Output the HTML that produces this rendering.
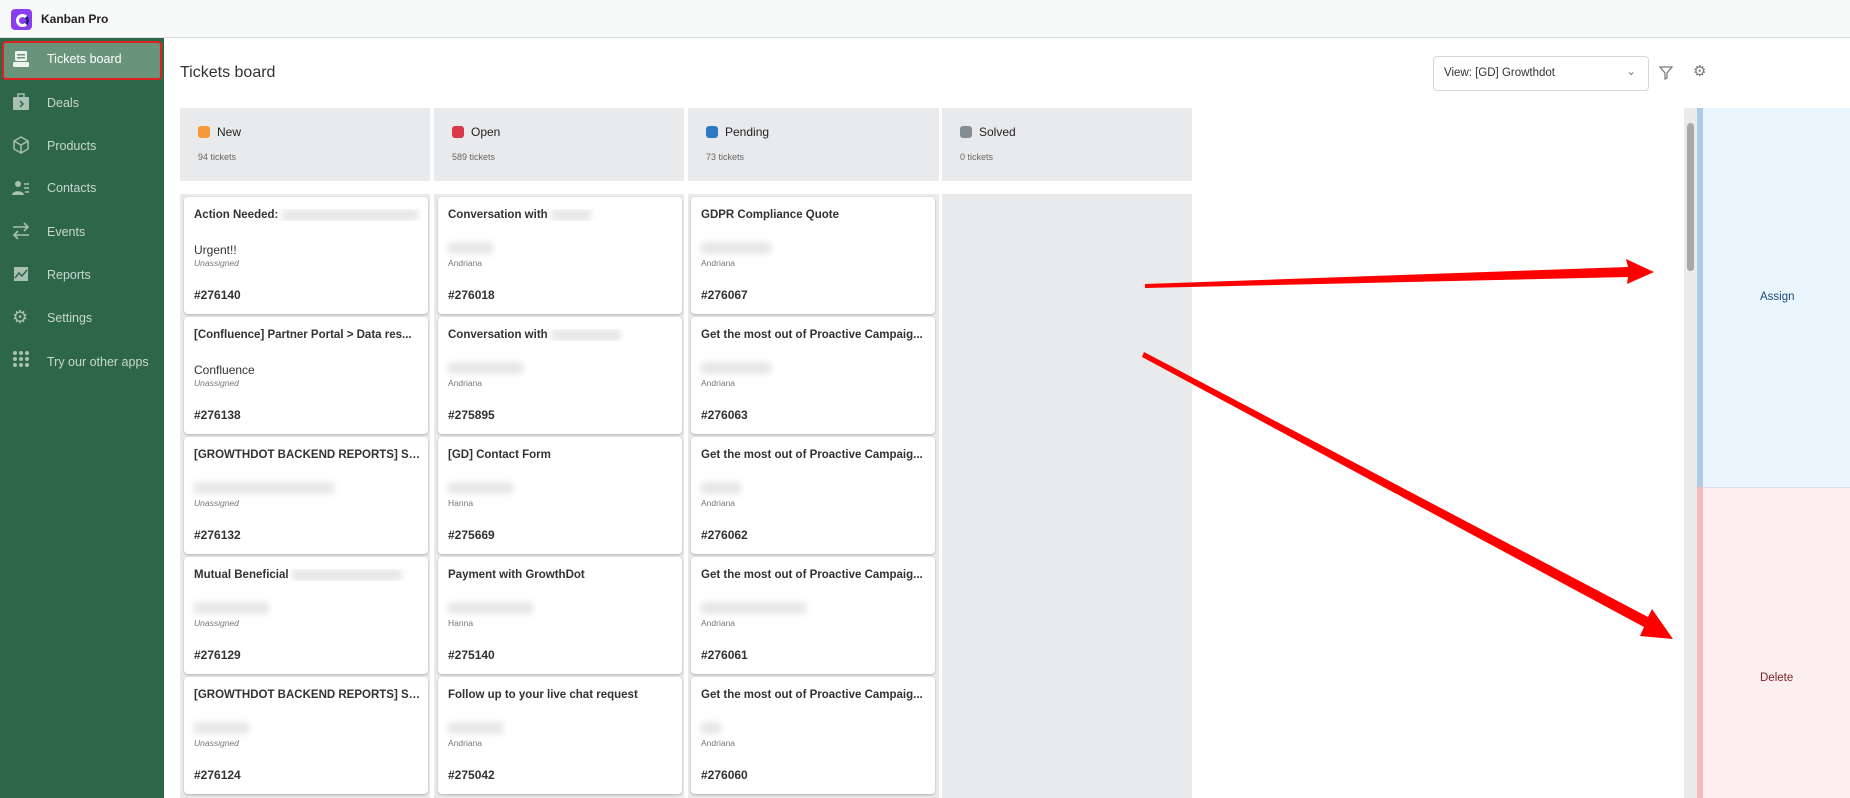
<!DOCTYPE html>
<html><head><meta charset="utf-8"><style>
*{box-sizing:border-box;margin:0;padding:0}
body{width:1850px;height:798px;overflow:hidden;background:#fff;font-family:"Liberation Sans",sans-serif;position:relative;color:#303844}
.top{position:absolute;left:0;top:0;width:1850px;height:38px;background:#f8f9f9;border-bottom:1px solid #dde0e3}
.logo{position:absolute;left:11px;top:9px;width:21px;height:21px;border-radius:4px;background:#8a3ef0}
.logo:after{content:"";position:absolute;left:5px;top:5px;width:7px;height:7px;border:3px solid #fff;border-radius:50%;border-right-color:#1b2a7a}
.brand{position:absolute;left:41px;top:12px;font-size:12px;font-weight:bold;color:#222}
.side{position:absolute;left:0;top:38px;width:164px;height:760px;background:#2e6648}
.act{position:absolute;left:2px;top:3px;width:160px;height:39px;background:#6a9479;border:2px solid #e02020;border-radius:4px}
.mi{position:absolute;left:47px;font-size:12.5px;color:#c9d8cf}
.title{position:absolute;left:180px;top:64px;font-size:16px;color:#333}
.dd{position:absolute;left:1433px;top:56px;width:216px;height:35px;border:1px solid #d5d8dc;border-radius:4px;font-size:11.5px;padding:10px 10px;color:#333}
.hd{position:absolute;top:108px;height:73px;background:#e9eaec}
.hd b{position:absolute;left:18px;top:17px;font-weight:normal;font-size:12px;color:#222}
.hd i{position:absolute;left:0;top:18px;width:12px;height:12px;border-radius:3px}
.hd s{position:absolute;left:18px;top:44px;text-decoration:none;font-size:9px;color:#666}
.colbg{position:absolute;top:194px;height:604px;background:#e9eaec}
.card{position:absolute;width:244px;height:117px;background:#fff;border-radius:4px;box-shadow:0 1px 2px rgba(0,0,0,.25);overflow:hidden}
.card .t{position:absolute;left:10px;top:12px;width:228px;font-size:11.5px;font-weight:bold;color:#333;white-space:nowrap;overflow:hidden;text-overflow:ellipsis}
.card .s{position:absolute;left:10px;top:46px;font-size:12px;color:#333}
.card .a{position:absolute;left:10px;top:61px;font-size:8.5px;color:#777}
.card .n{position:absolute;left:10px;top:91px;font-size:12px;font-weight:bold;color:#333}
.bl{display:inline-block;height:12px;background:#e8e8e8;filter:blur(3px);vertical-align:middle}
.blk{position:absolute;left:10px;top:45px;height:12px;background:#e8e8e8;filter:blur(3px)}
svg.si{position:absolute;left:12px}
</style></head><body>
<div class="top"><div class="logo"></div><div class="brand">Kanban Pro</div></div>
<div class="side">
<div class="act"></div>
<svg class="si" style="top:12px" width="18" height="18" viewBox="0 0 18 18"><rect x="3" y="1" width="12" height="10" rx="1.5" fill="#eef3ef"/><rect x="1" y="12" width="16" height="5" rx="1" fill="#eef3ef"/><rect x="5" y="4" width="8" height="1.5" fill="#6a9479"/><rect x="5" y="7" width="8" height="1.5" fill="#6a9479"/></svg>
<div class="mi" style="top:14px;color:#fff">Tickets board</div>
<svg class="si" style="top:55px" width="18" height="18" viewBox="0 0 18 18"><rect x="1" y="4" width="16" height="13" rx="1" fill="#a9c0b2"/><rect x="6" y="1" width="6" height="4" fill="none" stroke="#a9c0b2" stroke-width="1.5"/><path d="M8 8l3 3-3 3" stroke="#2e6648" stroke-width="1.5" fill="none"/></svg>
<div class="mi" style="top:58px">Deals</div>
<svg class="si" style="top:98px" width="18" height="18" viewBox="0 0 18 18"><path d="M9 1l7 4v8l-7 4-7-4V5z M2 5l7 4 7-4 M9 9v8" fill="none" stroke="#a9c0b2" stroke-width="1.5"/></svg>
<div class="mi" style="top:101px">Products</div>
<svg class="si" style="top:141px" width="18" height="18" viewBox="0 0 18 18"><circle cx="6" cy="5" r="3" fill="#a9c0b2"/><path d="M0 16c0-5 12-5 12 0z" fill="#a9c0b2"/><path d="M12 5h5M12 9h5M13 13h4" stroke="#a9c0b2" stroke-width="1.4"/></svg>
<div class="mi" style="top:143px">Contacts</div>
<svg class="si" style="top:184px" width="18" height="18" viewBox="0 0 18 18"><path d="M1 5h15M12 1l4 4-4 4M17 13H2M6 9l-4 4 4 4" fill="none" stroke="#a9c0b2" stroke-width="1.6"/></svg>
<div class="mi" style="top:187px">Events</div>
<svg class="si" style="top:227px" width="18" height="18" viewBox="0 0 18 18"><rect x="2" y="2" width="14" height="14" fill="#a9c0b2"/><path d="M3 13l4-5 3 3 5-6" stroke="#2e6648" stroke-width="1.5" fill="none"/></svg>
<div class="mi" style="top:230px">Reports</div>
<div class="mi" style="top:269px;left:12px;font-size:18px;color:#a9c0b2">⚙</div><div class="mi" style="top:273px">Settings</div>
<svg class="si" style="top:312px" width="18" height="18" viewBox="0 0 18 18" fill="#a9c0b2"><circle cx="3" cy="3" r="2"/><circle cx="9" cy="3" r="2"/><circle cx="15" cy="3" r="2"/><circle cx="3" cy="9" r="2"/><circle cx="9" cy="9" r="2"/><circle cx="15" cy="9" r="2"/><circle cx="3" cy="15" r="2"/><circle cx="9" cy="15" r="2"/><circle cx="15" cy="15" r="2"/></svg>
<div class="mi" style="top:317px">Try our other apps</div>
</div>
<div class="title">Tickets board</div>
<div class="dd">View: [GD] Growthdot<span style="position:absolute;right:12px;top:7px;color:#777">&#8964;</span></div>
<svg style="position:absolute;left:1658px;top:65px" width="16" height="16" viewBox="0 0 16 16"><path d="M2 2h12l-5 6v5l-2 1V8z" fill="none" stroke="#777" stroke-width="1.2"/></svg>
<div style="position:absolute;left:1693px;top:62px;font-size:15px;color:#777">⚙</div>

<div class="hd" style="left:180px;width:250px"><i style="left:18px;background:#f59a3a"></i><b style="left:37px">New</b><s>94 tickets</s></div>
<div class="hd" style="left:434px;width:250px"><i style="left:18px;background:#d9384a"></i><b style="left:37px">Open</b><s>589 tickets</s></div>
<div class="hd" style="left:688px;width:251px"><i style="left:18px;background:#2f7ac0"></i><b style="left:37px">Pending</b><s>73 tickets</s></div>
<div class="hd" style="left:942px;width:250px"><i style="left:18px;background:#868c94"></i><b style="left:37px">Solved</b><s>0 tickets</s></div>

<div class="colbg" style="left:180px;width:250px"></div>
<div class="colbg" style="left:434px;width:250px"></div>
<div class="colbg" style="left:688px;width:251px"></div>
<div class="colbg" style="left:942px;width:250px"></div>

<div class="card" style="left:184px;top:197px"><div class="t">Action Needed: <span class="bl" style="width:136px"></span></div><div class="s">Urgent!!</div><div class="a"><i>Unassigned</i></div><div class="n">#276140</div></div>
<div class="card" style="left:184px;top:317px"><div class="t">[Confluence] Partner Portal &gt; Data res...</div><div class="s">Confluence</div><div class="a"><i>Unassigned</i></div><div class="n">#276138</div></div>
<div class="card" style="left:184px;top:437px"><div class="t">[GROWTHDOT BACKEND REPORTS] Su...</div><div class="blk" style="width:140px"></div><div class="a"><i>Unassigned</i></div><div class="n">#276132</div></div>
<div class="card" style="left:184px;top:557px"><div class="t">Mutual Beneficial <span class="bl" style="width:110px"></span></div><div class="blk" style="width:75px"></div><div class="a"><i>Unassigned</i></div><div class="n">#276129</div></div>
<div class="card" style="left:184px;top:677px"><div class="t">[GROWTHDOT BACKEND REPORTS] Su...</div><div class="blk" style="width:55px"></div><div class="a"><i>Unassigned</i></div><div class="n">#276124</div></div>

<div class="card" style="left:438px;top:197px"><div class="t">Conversation with <span class="bl" style="width:40px"></span></div><div class="blk" style="width:45px"></div><div class="a">Andriana</div><div class="n">#276018</div></div>
<div class="card" style="left:438px;top:317px"><div class="t">Conversation with <span class="bl" style="width:70px"></span></div><div class="blk" style="width:75px"></div><div class="a">Andriana</div><div class="n">#275895</div></div>
<div class="card" style="left:438px;top:437px"><div class="t">[GD] Contact Form</div><div class="blk" style="width:65px"></div><div class="a">Hanna</div><div class="n">#275669</div></div>
<div class="card" style="left:438px;top:557px"><div class="t">Payment with GrowthDot</div><div class="blk" style="width:85px"></div><div class="a">Hanna</div><div class="n">#275140</div></div>
<div class="card" style="left:438px;top:677px"><div class="t">Follow up to your live chat request</div><div class="blk" style="width:55px"></div><div class="a">Andriana</div><div class="n">#275042</div></div>

<div class="card" style="left:691px;top:197px"><div class="t">GDPR Compliance Quote</div><div class="blk" style="width:70px"></div><div class="a">Andriana</div><div class="n">#276067</div></div>
<div class="card" style="left:691px;top:317px"><div class="t">Get the most out of Proactive Campaig...</div><div class="blk" style="width:70px"></div><div class="a">Andriana</div><div class="n">#276063</div></div>
<div class="card" style="left:691px;top:437px"><div class="t">Get the most out of Proactive Campaig...</div><div class="blk" style="width:40px"></div><div class="a">Andriana</div><div class="n">#276062</div></div>
<div class="card" style="left:691px;top:557px"><div class="t">Get the most out of Proactive Campaig...</div><div class="blk" style="width:105px"></div><div class="a">Andriana</div><div class="n">#276061</div></div>
<div class="card" style="left:691px;top:677px"><div class="t">Get the most out of Proactive Campaig...</div><div class="blk" style="width:20px"></div><div class="a">Andriana</div><div class="n">#276060</div></div>

<div style="position:absolute;left:1684px;top:108px;width:13px;height:690px;background:#e9eaec"></div>
<div style="position:absolute;left:1687px;top:123px;width:7px;height:148px;background:#a8a8a8;border-radius:4px"></div>
<div style="position:absolute;left:1697px;top:108px;width:6px;height:379px;background:#aecbe6"></div>
<div style="position:absolute;left:1703px;top:108px;width:147px;height:379px;background:#ebf5fd"></div>
<div style="position:absolute;left:1697px;top:487px;width:6px;height:311px;background:#f6b8c0"></div>
<div style="position:absolute;left:1703px;top:487px;width:147px;height:311px;background:#fdeff0;border-top:1px solid #dde"></div>
<div style="position:absolute;left:1760px;top:291px;font-size:11.5px;color:#1d4a78">Assign</div>
<div style="position:absolute;left:1760px;top:672px;font-size:11.5px;color:#7a1e24">Delete</div>

<svg style="position:absolute;left:0;top:0" width="1850" height="798">
<polygon points="1145,284 1628,267 1626,259 1654,272 1627,284 1628,277 1145,288" fill="#ff0000"/>
<polygon points="1144,352 1648,617 1652,609 1673,639 1640,636 1644,627 1142,357" fill="#ff0000"/>
</svg>
</body></html>
